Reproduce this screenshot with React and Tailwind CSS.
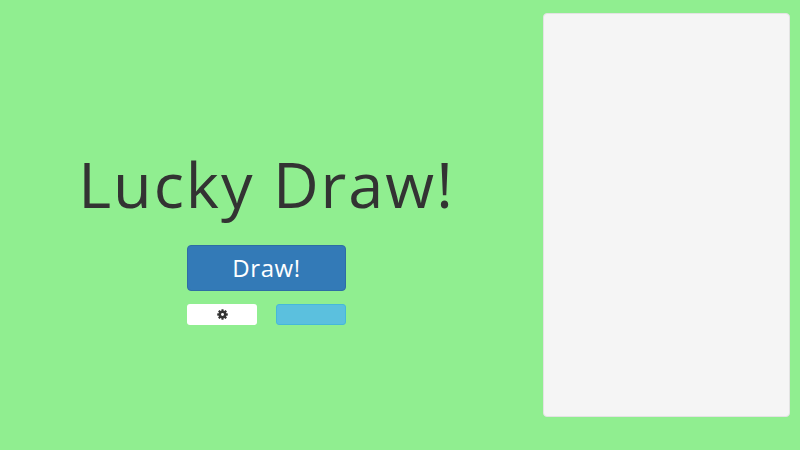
export default function App() {
  return (
    <div className="h-[450px] w-[800px] overflow-hidden bg-[#90ee90] flex font-['Open_Sans',sans-serif]">
      {/* Left side */}
      <div className="w-[533px] pt-[146px] flex flex-col items-center">
        <h1 className="text-[63px] leading-[76px] tracking-[2px] text-[#333333] font-medium whitespace-nowrap">Lucky Draw!</h1>
        <div className="mt-[23px] w-[159px] flex flex-col gap-[13px]">
          <button className="h-[46px] bg-[#337ab7] border border-[#2e6da4] rounded text-white text-[24px] tracking-[0.6px]">Draw!</button>
          <div className="flex justify-between">
            <button className="w-[70px] h-[21px] bg-white rounded-[3px] flex items-center justify-center">
              <svg viewBox="0 0 24 24" className="w-[11px] h-[11px] text-[#333333]">
                <g fill="currentColor">
                  <rect x="9.5" y="0.5" width="5" height="23" rx="1" />
                  <rect x="9.5" y="0.5" width="5" height="23" rx="1" transform="rotate(45 12 12)" />
                  <rect x="9.5" y="0.5" width="5" height="23" rx="1" transform="rotate(90 12 12)" />
                  <rect x="9.5" y="0.5" width="5" height="23" rx="1" transform="rotate(135 12 12)" />
                </g>
                <circle cx="12" cy="12" r="6" fill="none" stroke="currentColor" strokeWidth="4" />
                <circle cx="12" cy="12" r="3.2" fill="#ffffff" />
              </svg>
            </button>
            <button className="w-[70px] h-[21px] bg-[#5bc0de] border border-[#46b8da] rounded-[3px]" />
          </div>
        </div>
      </div>

      {/* Results panel */}
      <div className="ml-[10px] mt-[13px] w-[247px] h-[404px] bg-[#f5f5f5] border border-[#e3e3e3] rounded" />
    </div>
  );
}
